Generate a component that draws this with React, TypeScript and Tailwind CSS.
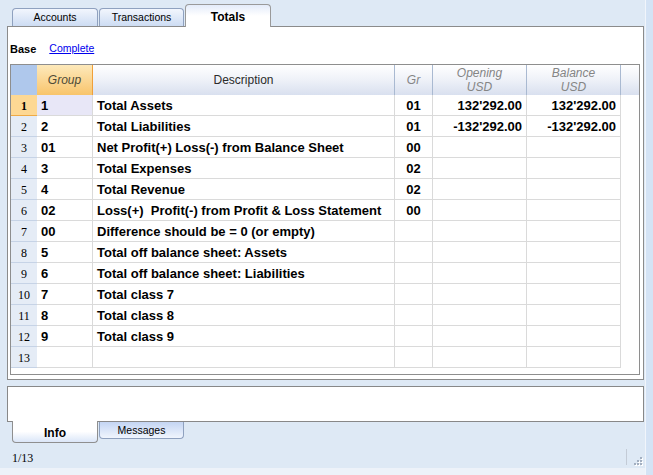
import React from 'react';

type Row = { group: string; desc: string; gr: string; opening: string; balance: string };

const rows: Row[] = [
    { group: '1', desc: 'Total Assets', gr: '01', opening: "132'292.00", balance: "132'292.00" },
    { group: '2', desc: 'Total Liabilities', gr: '01', opening: "-132'292.00", balance: "-132'292.00" },
    { group: '01', desc: 'Net Profit(+) Loss(-) from Balance Sheet', gr: '00', opening: '', balance: '' },
    { group: '3', desc: 'Total Expenses', gr: '02', opening: '', balance: '' },
    { group: '4', desc: 'Total Revenue', gr: '02', opening: '', balance: '' },
    { group: '02', desc: 'Loss(+)  Profit(-) from Profit & Loss Statement', gr: '00', opening: '', balance: '' },
    { group: '00', desc: 'Difference should be = 0 (or empty)', gr: '', opening: '', balance: '' },
    { group: '5', desc: 'Total off balance sheet: Assets', gr: '', opening: '', balance: '' },
    { group: '6', desc: 'Total off balance sheet: Liabilities', gr: '', opening: '', balance: '' },
    { group: '7', desc: 'Total class 7', gr: '', opening: '', balance: '' },
    { group: '8', desc: 'Total class 8', gr: '', opening: '', balance: '' },
    { group: '9', desc: 'Total class 9', gr: '', opening: '', balance: '' },
    { group: '', desc: '', gr: '', opening: '', balance: '' },
];

const cols = 'grid grid-cols-[26px_56px_302px_38px_94px_94px_18px]';
const headCell = 'bg-gradient-to-b from-[#ffffff] via-[#eef1f8] to-[#d9e0ef] border-r border-[#a9b9d1] flex flex-col items-center justify-center leading-[14px]';
const cell = 'border-b border-r border-[#dadada] pt-[2px] leading-[18px]';

const TopTab: React.FC<{ label: string; active?: boolean; width: string }> = ({ label, active, width }) => {
    if (active) {
        return (
            <div className={`${width} h-[23px] -mb-px pt-[2px] relative z-10 bg-gradient-to-b from-[#e4ecfa] via-white to-white border border-b-0 border-[#9a9a9a] rounded-t-[4px] flex items-center justify-center text-[12px] font-bold text-black`}>
                {label}
            </div>
        );
    }
    return (
        <div className={`${width} h-[18px] pt-px bg-gradient-to-b from-[#f2f6fd] to-[#cddcf3] border border-b-0 border-[#8fa1bf] rounded-t-[4px] flex items-center justify-center text-[10.5px] text-black`}>
            {label}
        </div>
    );
};

const Grip: React.FC = () => (
    <svg width="9" height="9" viewBox="0 0 9 9" className="self-end mb-[2px]">
        {[[6, 0], [3, 3], [6, 3], [0, 6], [3, 6], [6, 6]].map(([x, y], i) => (
            <g key={i}>
                <rect x={x + 1} y={y + 1} width="2" height="2" fill="#ffffff" />
                <rect x={x} y={y} width="2" height="2" fill="#a3afc0" />
            </g>
        ))}
    </svg>
);

export default function App() {
    return (
        <div className="w-[653px] h-[475px] flex bg-[#dee9f5] overflow-hidden text-black" style={{ fontFamily: '"Liberation Sans", Arial, sans-serif' }}>
            <div className="w-[645px] flex flex-col">
                {/* Top tabs */}
                <div className="h-[26px] flex items-end pl-[12px] gap-[1px]">
                    <TopTab label="Accounts" width="w-[86px]" />
                    <TopTab label="Transactions" width="w-[85px]" />
                    <TopTab label="Totals" width="w-[86px]" active />
                </div>

                {/* Panel */}
                <div className="ml-[7px] w-[637px] h-[354px] bg-white border border-[#8b8b8b] flex flex-col">
                    <div className="h-[16px] mt-[14px] flex items-center pl-[2px] gap-[13px]">
                        <span className="text-[11px] font-bold">Base</span>
                        <span className="text-[10.5px] text-[#0000ee] underline">Complete</span>
                    </div>

                    <div className="mt-[7px] ml-[2px] w-[630px] h-[311px] border border-[#8e8e8e] flex flex-col">
                        {/* Header */}
                        <div className={`${cols} h-[30px] text-[12px]`}>
                            <div className="bg-[#afc8ec]" />
                            <div className="bg-gradient-to-b from-[#fde9ba] to-[#f8c46a] border-r border-[#f0a03a] flex items-center justify-center italic text-[#4d4a36]">Group</div>
                            <div className={`${headCell} text-[#2b2b2b]`}>Description</div>
                            <div className={`${headCell} italic text-[#858585]`}>Gr</div>
                            <div className={`${headCell} italic text-[#858585]`}>
                                <span>Opening</span>
                                <span>USD</span>
                            </div>
                            <div className={`${headCell} italic text-[#858585]`}>
                                <span>Balance</span>
                                <span>USD</span>
                            </div>
                            <div className="bg-gradient-to-b from-[#ffffff] via-[#eef1f8] to-[#d9e0ef]" />
                        </div>

                        {/* Body */}
                        {rows.map((r, i) => {
                            const first = i === 0;
                            return (
                                <div key={i} className={`${cols} h-[21px] text-[13px] font-bold`}>
                                    <div
                                        className={`border-b pt-[2px] leading-[18px] text-center text-[12px] ${first ? 'bg-[#fdd894] border-[#efaa45] font-bold' : 'bg-[#e5ecf6] border-[#c6d3e6] font-normal'}`}
                                        style={{ fontFamily: '"Liberation Serif", "Times New Roman", serif' }}
                                    >
                                        {i + 1}
                                    </div>
                                    <div className={`${cell} px-[4px] ${first ? 'bg-[#e8e7f7]' : ''}`}>{r.group}</div>
                                    <div className={`${cell} px-[4px] whitespace-pre overflow-hidden`}>{r.desc}</div>
                                    <div className={`${cell} text-center`}>{r.gr}</div>
                                    <div className={`${cell} text-right pr-[4px]`}>{r.opening}</div>
                                    <div className={`${cell} text-right pr-[4px]`}>{r.balance}</div>
                                    <div />
                                </div>
                            );
                        })}
                        <div className="flex-1" />
                    </div>
                </div>

                {/* Info box */}
                <div className="mt-[6px] ml-[7px] w-[637px] h-[36px] bg-white border border-[#888888]" />

                {/* Bottom tabs */}
                <div className="h-[22px] -mt-px flex items-start pl-[12px] gap-[1px]">
                    <div className="w-[86px] h-[22px] pt-[2px] relative z-10 bg-gradient-to-b from-white via-white to-[#dbe6f8] border border-t-0 border-[#8f8f8f] rounded-b-[4px] flex items-center justify-center text-[12px] font-bold">
                        Info
                    </div>
                    <div className="w-[85px] h-[17px] mt-px pt-px bg-gradient-to-b from-[#c4d5f3] to-[#f0f5fd] border border-t-0 border-[#8fa1bf] rounded-b-[4px] flex items-center justify-center text-[10.5px]">
                        Messages
                    </div>
                </div>

                {/* Status bar */}
                <div className="h-[25px] flex items-center pt-[5px]">
                    <span className="pl-[12px] text-[12px]" style={{ fontFamily: '"Liberation Serif", "Times New Roman", serif' }}>1/13</span>
                    <div className="ml-auto w-px h-[16px] bg-[#c3cbd6] self-start mt-[1px]" />
                    <div className="ml-[7px] mr-[2px] h-full flex">
                        <Grip />
                    </div>
                </div>
                <div className="h-[7px] bg-[#edf2f9]" />
            </div>
            <div className="w-[8px] bg-[#d4e3f5] border-l border-[#f1f5fb]" />
        </div>
    );
}
